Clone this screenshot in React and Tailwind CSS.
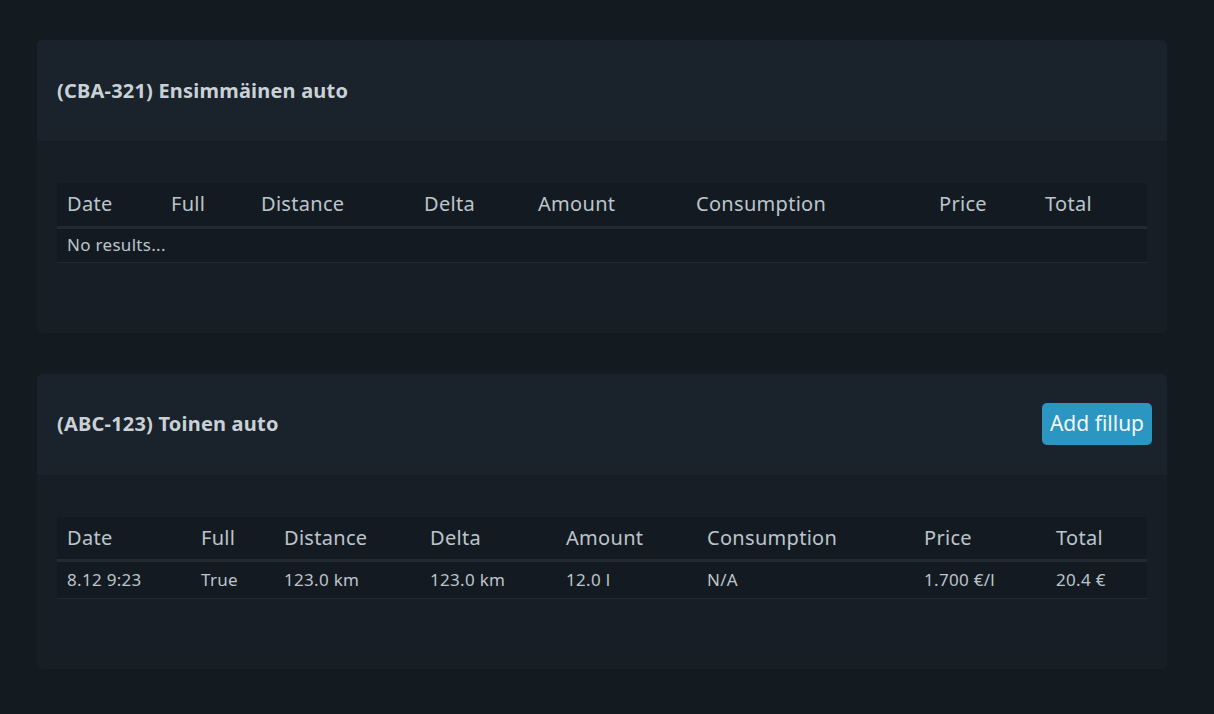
const COLS = ['Date', 'Full', 'Distance', 'Delta', 'Amount', 'Consumption', 'Price', 'Total']

const cars = [
  {
    title: '(CBA-321) Ensimmäinen auto',
    canAdd: false,
    widths: [104, 90, 163, 114, 158, 243, 106, 112],
    rows: [],
  },
  {
    title: '(ABC-123) Toinen auto',
    canAdd: true,
    widths: [134, 83, 146, 136, 141, 217, 132, 101],
    rows: [['8.12 9:23', 'True', '123.0 km', '123.0 km', '12.0 l', 'N/A', '1.700 €/l', '20.4 €']],
  },
]

function CarCard({ car }) {
  return (
    <section className="rounded-[5px] bg-[#171e26] overflow-hidden">
      <div className="h-[102px] flex items-center justify-between pl-5 pr-[15px] bg-[#1a232b] border-b border-[#151c23]">
        <h2 className="text-[20px] font-bold text-[#c9d1d7] tracking-[0.2px]">{car.title}</h2>
        {car.canAdd && (
          <button className="h-[42px] w-[110px] rounded-[5px] bg-[#2b96c1] text-[21px] text-[#f2f6f8]">
            Add fillup
          </button>
        )}
      </div>
      <div className="px-5 pt-[41px] pb-[70px]">
        <table className="w-full table-fixed border-collapse bg-[#141a21] text-[#bcc5cb]">
          <colgroup>
            {car.widths.map((w, i) => (
              <col key={i} style={{ width: w }} />
            ))}
          </colgroup>
          <thead>
            <tr className="h-[44px] border-b-[3px] border-[#222b33]">
              {COLS.map((c) => (
                <th key={c} className="text-left font-normal text-[20px] tracking-[0.3px] px-[10px]">
                  {c}
                </th>
              ))}
            </tr>
          </thead>
          <tbody>
            {car.rows.length === 0 ? (
              <tr className="h-[35px] border-b border-[#222a31]">
                <td colSpan={8} className="px-[10px] text-[17px] tracking-[0.3px]">No results...</td>
              </tr>
            ) : (
              car.rows.map((r, i) => (
                <tr key={i} className="h-[38px] border-b border-[#222a31]">
                  {r.map((v, j) => (
                    <td key={j} className="px-[10px] text-[17px] tracking-[0.3px]">{v}</td>
                  ))}
                </tr>
              ))
            )}
          </tbody>
        </table>
      </div>
    </section>
  )
}

export default function App() {
  return (
    <div className="min-h-[714px] bg-[#131a20] font-['Noto_Sans',sans-serif]">
      <div className="pl-[37px] pr-[47px] pt-10 pb-10 flex flex-col gap-[41px]">
        {cars.map((car) => (
          <CarCard key={car.title} car={car} />
        ))}
      </div>
    </div>
  )
}
